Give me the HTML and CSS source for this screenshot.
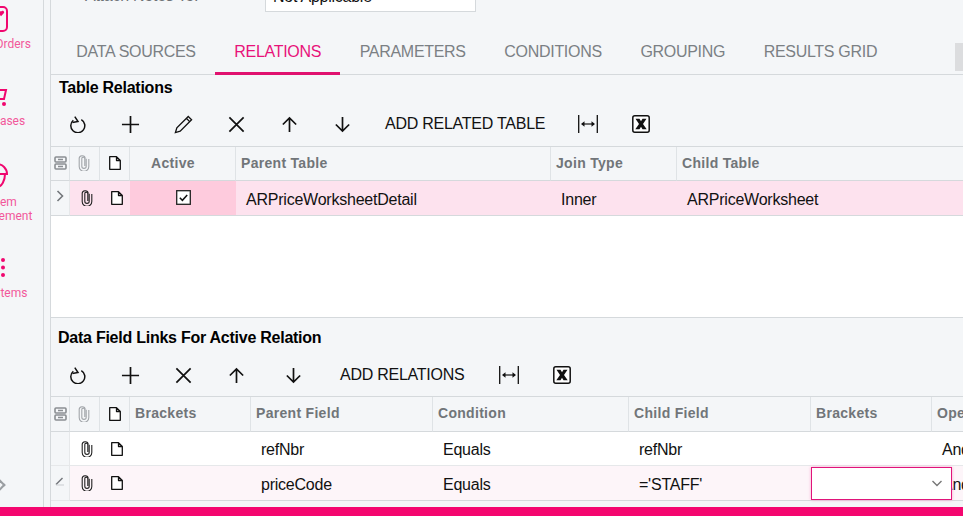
FILE: index.html
```html
<!DOCTYPE html>
<html lang="en">
<head>
<meta charset="utf-8">
<title>Generic Inquiry</title>
<link rel="stylesheet" href="styles.css">
</head>
<body>
<svg class="sprites" aria-hidden="true">
  <symbol id="i-refresh" viewBox="0 0 16 17"><path d="M11.300 3.600A7 7 0 1 1 3.300 4.300" fill="none" stroke="currentColor" stroke-width="1.500"/><path d="M4.800.7 8 5.500 2.400 6.600" fill="none" stroke="currentColor" stroke-width="1.500"/></symbol>
  <symbol id="i-plus" viewBox="0 0 20 20"><path d="M10 1v18M1 10h18" fill="none" stroke="currentColor" stroke-width="1.800"/></symbol>
  <symbol id="i-pencil" viewBox="0 0 20 20"><path d="M15 1.500 18.500 5 6.500 17 1.500 18.500 3 13.500zM13 3.500 16.500 7" fill="none" stroke="currentColor" stroke-width="1.400"/></symbol>
  <symbol id="i-x" viewBox="0 0 20 20"><path d="M2.500 2.500l15 15M17.500 2.500l-15 15" fill="none" stroke="currentColor" stroke-width="1.800"/></symbol>
  <symbol id="i-up" viewBox="0 0 20 20"><path d="M10 18V3M3 10 10 3l7 7" fill="none" stroke="currentColor" stroke-width="1.800"/></symbol>
  <symbol id="i-down" viewBox="0 0 20 20"><path d="M10 2v15M3 10 10 17l7-7" fill="none" stroke="currentColor" stroke-width="1.800"/></symbol>
  <symbol id="i-fit" viewBox="0 0 20 18"><path d="M.7 0v18M19.300 0v18" fill="none" stroke="currentColor" stroke-width="1.300"/><path d="M4 9h12" fill="none" stroke="currentColor" stroke-width="1.200"/><path d="M3 9l3.500-2.800v5.600zM17 9l-3.500-2.800v5.600z" fill="currentColor"/></symbol>
  <symbol id="i-excel" viewBox="0 0 18 18"><rect x=".8" y=".8" width="16.400" height="16.400" rx="2" fill="#fff" stroke="currentColor" stroke-width="1.500"/><path d="M3.500 3.800h4l1.500 2.500 1.500-2.500h4L11 9l3.700 5.200h-4.200L9 11.700l-1.500 2.500H3.300L7 9z" fill="currentColor"/></symbol>
  <symbol id="i-clip" viewBox="0 0 12 16"><path d="M8.200 3.800v7.400a2.200 2.200 0 0 1-4.400 0V3.600a1.500 1.500 0 0 1 3 0v7.400" fill="none" stroke="currentColor" stroke-width="1.100"/><path d="M10.800 4v7.500a4.800 4.800 0 0 1-9.600 0V4a3 3 0 0 1 6-.5" fill="none" stroke="currentColor" stroke-width="1.100"/></symbol>
  <symbol id="i-doc" viewBox="0 0 12 14"><path d="M.7.700h6.800l3.800 3.800v8.800H.7zM7.500.700v3.800h3.800" fill="#fff" stroke="currentColor" stroke-width="1.300" stroke-linejoin="round"/></symbol>
  <symbol id="i-cols" viewBox="0 0 13 14"><rect x="1" y="1" width="11" height="5" rx="1" fill="none" stroke="currentColor" stroke-width="1.600"/><rect x="1" y="8" width="11" height="5" rx="1" fill="none" stroke="currentColor" stroke-width="1.600"/><path d="M4 3.500h5M4 10.500h5" stroke="currentColor" stroke-width="1.400"/></symbol>
</svg>

<div class="app">
  <div class="workspace">
    <nav class="sidebar">
      <a class="nav-item">
        <span class="nav-icon"><svg class="nav-svg" width="22" height="26" viewBox="0 0 22 26"><rect x="1" y="1" width="20" height="24" rx="4" fill="none" stroke="currentColor" stroke-width="2"/><path d="M15 5.500c1.400-1.600 3.800-.4 3 1.600l-3 3.200-2-2.800c-.6-1.800 1-3 2-2z" fill="currentColor"/></svg></span>
        <span class="nav-label">Sales Orders</span>
      </a>
      <a class="nav-item">
        <span class="nav-icon"><svg class="nav-svg nav-cart" width="22" height="20" viewBox="0 0 22 20"><path d="M1 1h4l3 11h10l2-9H6" fill="none" stroke="currentColor" stroke-width="2"/><circle cx="9" cy="17" r="2" fill="currentColor"/><circle cx="18" cy="17" r="2" fill="currentColor"/></svg></span>
        <span class="nav-label">Purchases</span>
      </a>
      <a class="nav-item">
        <span class="nav-icon nav-icon-tall"><svg class="nav-svg" width="24" height="28" viewBox="0 0 24 28"><path d="M2 13a10 10 0 0 1 20 0zM4 13c0 6 3 13 8 13s8-7 8-13" fill="none" stroke="currentColor" stroke-width="2"/></svg></span>
        <span class="nav-label">System<br>Management</span>
      </a>
      <a class="nav-item">
        <span class="nav-icon"><svg class="nav-svg" width="22" height="20" viewBox="0 0 22 20"><g fill="currentColor"><circle cx="5" cy="2" r="2"/><circle cx="5" cy="9.500" r="2"/><circle cx="5" cy="17" r="2"/><circle cx="11" cy="2" r="2"/><circle cx="11" cy="9.500" r="2"/><circle cx="11" cy="17" r="2"/><circle cx="17" cy="2" r="2"/><circle cx="17" cy="9.500" r="2"/><circle cx="17" cy="17" r="2"/></g></svg></span>
        <span class="nav-label">More Items</span>
      </a>
      <span class="nav-toggle"></span>
    </nav>

    <main class="main">
      <div class="form-row">
        <span class="form-label">Attach Notes To:</span>
        <span class="form-select">Not Applicable<svg class="form-chevron" width="10" height="6" viewBox="0 0 10 6"><path d="M1 1l4 4 4-4" fill="none" stroke="currentColor" stroke-width="1.300"/></svg></span>
      </div>

      <div class="tabs">
        <span class="tab">DATA SOURCES</span>
        <span class="tab tab-active">RELATIONS</span>
        <span class="tab">PARAMETERS</span>
        <span class="tab">CONDITIONS</span>
        <span class="tab">GROUPING</span>
        <span class="tab">RESULTS GRID</span>
        <span class="tab-scroll"></span>
      </div>

      <section class="panel panel-top">
        <h2 class="title">Table Relations</h2>
        <div class="toolbar">
          <span class="tool"><svg class="ti-refresh"><use href="#i-refresh"/></svg></span>
          <span class="tool"><svg class="ti"><use href="#i-plus"/></svg></span>
          <span class="tool"><svg class="ti"><use href="#i-pencil"/></svg></span>
          <span class="tool"><svg class="ti"><use href="#i-x"/></svg></span>
          <span class="tool"><svg class="ti"><use href="#i-up"/></svg></span>
          <span class="tool"><svg class="ti"><use href="#i-down"/></svg></span>
          <span class="tool-text">ADD RELATED TABLE</span>
          <span class="tool"><svg class="ti-fit"><use href="#i-fit"/></svg></span>
          <span class="tool"><svg class="ti-xl"><use href="#i-excel"/></svg></span>
        </div>
        <div class="grid grid-top">
          <div class="hc hc-icon"><svg class="ic-cols"><use href="#i-cols"/></svg></div>
          <div class="hc hc-icon"><svg class="ic-clip ic-muted"><use href="#i-clip"/></svg></div>
          <div class="hc hc-icon"><svg class="ic-doc"><use href="#i-doc"/></svg></div>
          <div class="hc hc-center">Active</div>
          <div class="hc">Parent Table</div>
          <div class="hc">Join Type</div>
          <div class="hc hc-last">Child Table</div>

          <div class="dc dc-lead"><svg class="chev" width="8" height="12" viewBox="0 0 8 12"><path d="M1.500 1l5 5-5 5" fill="none" stroke="currentColor" stroke-width="1.600"/></svg></div>
          <div class="dc dc-icon dc-sel"><svg class="ic-clip"><use href="#i-clip"/></svg></div>
          <div class="dc dc-icon dc-sel"><svg class="ic-doc"><use href="#i-doc"/></svg></div>
          <div class="dc dc-check"><svg width="15" height="15" viewBox="0 0 15 15"><rect x=".7" y=".7" width="13.600" height="13.600" fill="#fff" stroke="#222" stroke-width="1.300"/><path d="M3.800 7.800l2.600 2.500 4.800-5.300" fill="none" stroke="#111" stroke-width="1.500"/></svg></div>
          <div class="dc dc-sel">ARPriceWorksheetDetail</div>
          <div class="dc dc-sel">Inner</div>
          <div class="dc dc-sel">ARPriceWorksheet</div>
        </div>
      </section>

      <div class="blank"></div>

      <section class="panel panel-bottom">
        <h2 class="title title-bottom">Data Field Links For Active Relation</h2>
        <div class="toolbar toolbar-bottom">
          <span class="tool"><svg class="ti-refresh"><use href="#i-refresh"/></svg></span>
          <span class="tool"><svg class="ti"><use href="#i-plus"/></svg></span>
          <span class="tool"><svg class="ti"><use href="#i-x"/></svg></span>
          <span class="tool"><svg class="ti"><use href="#i-up"/></svg></span>
          <span class="tool tool-shift"><svg class="ti"><use href="#i-down"/></svg></span>
          <span class="tool-text tool-text-shift">ADD RELATIONS</span>
          <span class="tool"><svg class="ti-fit"><use href="#i-fit"/></svg></span>
          <span class="tool"><svg class="ti-xl"><use href="#i-excel"/></svg></span>
        </div>
        <div class="grid grid-bottom">
          <div class="hc hc-icon"><svg class="ic-cols"><use href="#i-cols"/></svg></div>
          <div class="hc hc-icon"><svg class="ic-clip ic-muted"><use href="#i-clip"/></svg></div>
          <div class="hc hc-icon"><svg class="ic-doc"><use href="#i-doc"/></svg></div>
          <div class="hc">Brackets</div>
          <div class="hc">Parent Field</div>
          <div class="hc">Condition</div>
          <div class="hc">Child Field</div>
          <div class="hc">Brackets</div>
          <div class="hc hc-last">Operator</div>

          <div class="dc dc-lead"></div>
          <div class="dc dc-icon"><svg class="ic-clip"><use href="#i-clip"/></svg></div>
          <div class="dc dc-icon"><svg class="ic-doc"><use href="#i-doc"/></svg></div>
          <div class="dc"></div>
          <div class="dc">refNbr</div>
          <div class="dc">Equals</div>
          <div class="dc">refNbr</div>
          <div class="dc"></div>
          <div class="dc">And</div>

          <div class="dc dc-lead"><svg class="edit-mark" width="10" height="10" viewBox="0 0 10 10"><path d="M1 8.500 7.500 2" fill="none" stroke="currentColor" stroke-width="1.500"/><path d="M1 9h8" stroke="#c9ccd0" stroke-width="1"/></svg></div>
          <div class="dc dc-icon dc-edit"><svg class="ic-clip"><use href="#i-clip"/></svg></div>
          <div class="dc dc-icon dc-edit"><svg class="ic-doc"><use href="#i-doc"/></svg></div>
          <div class="dc dc-edit"></div>
          <div class="dc dc-edit">priceCode</div>
          <div class="dc dc-edit">Equals</div>
          <div class="dc dc-edit">='STAFF'</div>
          <div class="dc dc-edit dc-editor-host"><span class="editor"><svg width="12" height="7" viewBox="0 0 12 7"><path d="M1.500 1l4.500 4.500L10.500 1" fill="none" stroke="currentColor" stroke-width="1.400"/></svg></span></div>
          <div class="dc dc-edit">And</div>
        </div>
      </section>
    </main>
  </div>
  <footer class="footer"></footer>
</div>
</body>
</html>
```

FILE: styles.css
```css
* { box-sizing: border-box; }

html, body {
  margin: 0;
  height: 100%;
  overflow: hidden;
}

body {
  font-family: "Liberation Sans", Arial, sans-serif;
  color: #111;
  background: #f4f6f8;
}

.sprites { display: none; }

.app {
  display: flex;
  flex-direction: column;
  height: 100%;
}

.workspace {
  display: flex;
  flex: 1;
  min-height: 0;
}

.footer {
  flex: none;
  height: 9px;
  background: #f4066f;
}

/* sidebar */
.sidebar {
  flex: none;
  width: 44px;
  display: flex;
  flex-direction: column;
  overflow: hidden;
  border-right: 1px solid #d5d9dc;
  padding-top: 6px;
}

.nav-item {
  flex: none;
  width: 100px;
  margin-left: -53px;
  margin-bottom: 32px;
  display: flex;
  flex-direction: column;
  align-items: center;
  color: #f0076f;
}

.nav-icon {
  height: 26px;
  margin-bottom: 5px;
  display: flex;
  align-items: center;
  justify-content: center;
}

.nav-icon-tall { height: 30px; }

.nav-svg { display: block; }
.nav-cart { margin-top: 2px; }

.nav-label {
  font: 12px/14px Roboto, "Liberation Sans", sans-serif;
  color: #f2589b;
  text-align: center;
  white-space: nowrap;
}

.nav-toggle {
  width: 8px;
  height: 8px;
  margin: auto 0 18px -4px;
  border-top: 2px solid #9a9ea2;
  border-right: 2px solid #9a9ea2;
  transform: rotate(45deg);
}

/* main */
.main {
  flex: 1;
  min-width: 0;
  margin-left: 6px;
  border-left: 1px solid #d5d9dc;
  display: flex;
  flex-direction: column;
  overflow: hidden;
}

.form-row {
  flex: none;
  height: 12px;
  display: flex;
  align-items: flex-end;
  overflow: hidden;
  padding-left: 34px;
  font-size: 16px;
  letter-spacing: -.25px;
}

.form-label {
  width: 180px;
  line-height: 24px;
  margin-bottom: 4px;
  flex: none;
  color: #6d7276;
}

.form-select {
  flex: none;
  width: 211px;
  height: 26px;
  border: 1px solid #d5d9dc;
  background: #fff;
  padding: 0 9px 4px 7px;
  color: #111;
  display: flex;
  align-items: center;
  justify-content: space-between;
}

.form-chevron { color: #777; }

/* tabs */
.tabs {
  flex: none;
  height: 63px;
  display: flex;
  align-items: flex-end;
  padding-left: 6px;
  border-bottom: 1px solid #d5d9dc;
}

.tab {
  flex: none;
  height: 63px;
  margin-bottom: -1px;
  padding: 31px 19.300px 0;
  font-size: 16px;
  letter-spacing: -.3px;
  line-height: 18px;
  color: #7b8084;
  border-bottom: 3px solid transparent;
}

.tab-active {
  color: #e8127a;
  border-bottom-color: #e0126f;
}

.tab-scroll {
  flex: none;
  width: 8px;
  height: 28px;
  margin: 0 0 3px auto;
  background: #dcdddf;
}

/* panels */
.panel { flex: none; }

.title {
  margin: 0;
  padding: 4px 0 5px 8px;
  font-size: 16px;
  letter-spacing: -.25px;
  line-height: 18px;
  font-weight: bold;
  color: #000;
}

.title-bottom {
  padding: 11px 0 7px 7px;
}

.toolbar {
  height: 44px;
  display: flex;
  align-items: center;
  color: #111;
}

.toolbar-bottom { height: 42px; }

.tool {
  flex: none;
  width: 53px;
  height: 30px;
  display: flex;
  align-items: center;
  justify-content: center;
}

.tool-shift { margin-left: 4px; }

.tool-text {
  flex: none;
  padding: 0 16px;
  font-size: 16px;
  letter-spacing: -.25px;
  line-height: 20px;
  color: #111;
}

.tool-text-shift { padding: 0 18px 0 20px; }

.ti { width: 19px; height: 19px; }
.ti-refresh { width: 16px; height: 17px; }
.ti-fit { width: 20px; height: 18px; }
.ti-xl { width: 18px; height: 18px; }

/* grids */
.grid {
  display: grid;
  border-top: 1px solid #d5d9dc;
}

.grid-top {
  grid-template-columns: 19px 30px 30px 106px 315px 126px 400px;
  grid-auto-rows: 34px 35px;
}

.grid-bottom {
  grid-template-columns: 19px 30px 30px 121px 182px 196px 182px 121px 100px;
  grid-auto-rows: 35px 34px 35px;
  border-bottom: 0;
}

.hc {
  display: flex;
  align-items: center;
  padding: 0 0 2px 5px;
  font-size: 14px;
  font-weight: bold;
  letter-spacing: .3px;
  color: #717579;
  border-right: 1px solid #dfe3e6;
  border-bottom: 1px solid #d5d9dc;
  white-space: nowrap;
}

.hc-icon {
  justify-content: center;
  padding: 0;
}

.hc-center {
  justify-content: center;
  padding: 0 19px 2px 0;
}

.hc-last { border-right: 0; }

.dc {
  display: flex;
  align-items: center;
  padding: 2px 0 0 10px;
  font-size: 16px;
  letter-spacing: -.23px;
  color: #111;
  background: #fff;
  border-bottom: 1px solid #e6e8ea;
  white-space: nowrap;
}

.grid-top .dc {
  padding-top: 4px;
  border-bottom-color: #d5d9dc;
}

.dc-edit {
  padding-top: 4px;
  background: #fdf5f9;
  border-bottom-color: #d5d9dc;
}

.grid .dc-lead {
  justify-content: center;
  padding: 0;
  background: #f4f6f8;
  color: #73777b;
  border-right: 1px solid #e6e8ea;
}

.grid .dc-icon {
  justify-content: center;
  padding: 0 0 0 4px;
}

.dc-sel { background: #fde2ee; }

.grid .dc-check {
  justify-content: center;
  padding: 0 0 2px;
  background: #fecbdd;
}

.dc-editor-host { position: relative; }

.editor {
  position: absolute;
  left: 0;
  top: 1px;
  width: 141px;
  height: 33px;
  z-index: 1;
  display: flex;
  align-items: center;
  justify-content: flex-end;
  padding-right: 8px;
  color: #777;
  background: #fff;
  border: 1px solid #e0147a;
  box-shadow: 0 0 3px #f9a6cc;
}

.ic-clip { width: 12px; height: 16px; color: #222; }
.ic-muted { color: #a2a6aa; }
.ic-doc { width: 12px; height: 14px; color: #111; }
.ic-cols { width: 13px; height: 14px; color: #8a8e92; }

.chev { margin-bottom: 5px; }
.edit-mark { margin-bottom: 4px; }

.hc-icon .ic-clip { margin: -1px 2px 0 0; }
.hc-icon .ic-doc { margin-top: -1px; }
.hc-icon .ic-cols { margin-top: -1px; }

.blank {
  flex: none;
  height: 102px;
  background: #fff;
  border-bottom: 1px solid #d5d9dc;
}
```
